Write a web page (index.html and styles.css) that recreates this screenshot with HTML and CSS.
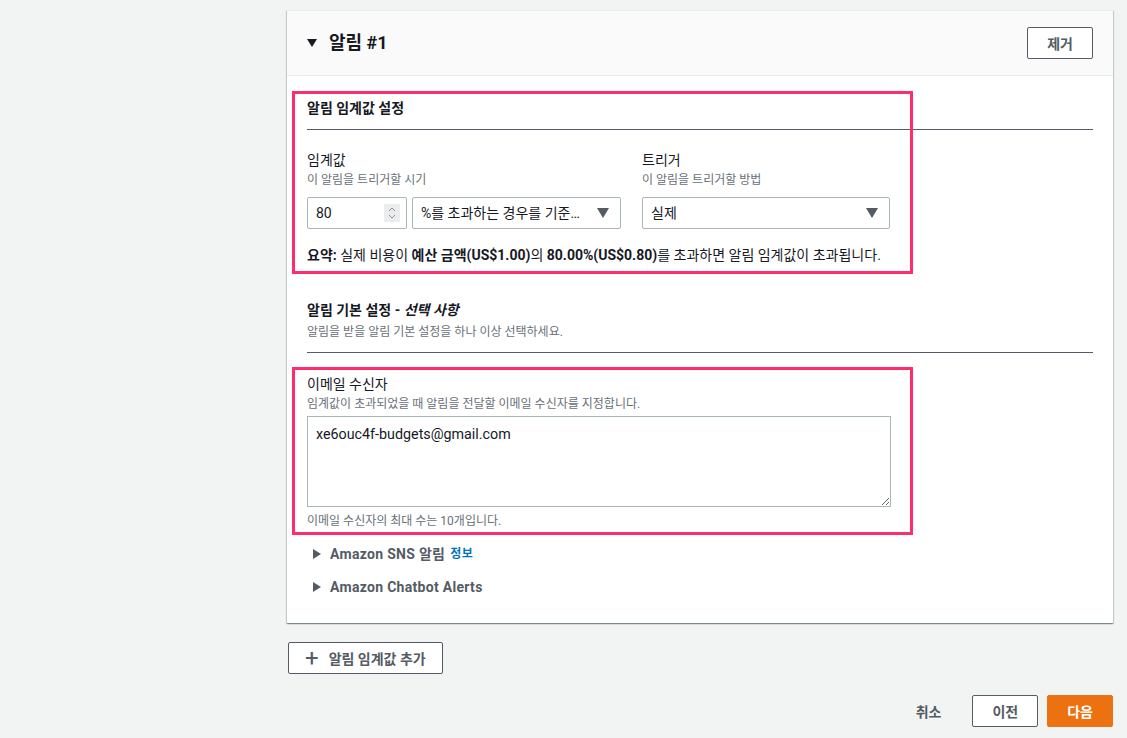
FILE: index.html
```html
<!DOCTYPE html>
<html lang="ko">
<head>
    <meta charset="UTF-8">
    <title>알림 구성</title>
    <link rel="stylesheet" href="styles.css">
</head>
<body>
    <div class="layout">
        <div class="side"></div>
        <main class="content">
            <!-- Alert #1 -->
            <div class="card">
                <div class="card-header">
                    <h2 class="card-title"><span class="caret-down"></span>알림 #1</h2>
                    <button class="btn">제거</button>
                </div>
                <div class="card-body">
                    <div class="highlight hl-threshold">
                        <h3 class="section-title">알림 임계값 설정</h3>
                        <div class="field-row">
                            <div class="field field-threshold">
                                <div class="label">임계값</div>
                                <div class="desc">이 알림을 트리거할 시기</div>
                                <div class="controls">
                                    <div class="input number-input">
                                        <span>80</span>
                                        <span class="spinner">
                                            <svg width="10" height="14" viewBox="0 0 10 14"><path d="M2 5 L5 2 L8 5" fill="none" stroke="#879196" stroke-width="1"/><path d="M2 9 L5 12 L8 9" fill="none" stroke="#879196" stroke-width="1"/></svg>
                                        </span>
                                    </div>
                                    <div class="input select select-type">
                                        <span>%를 초과하는 경우를 기준…</span>
                                        <span class="select-caret"></span>
                                    </div>
                                </div>
                            </div>
                            <div class="field field-trigger">
                                <div class="label">트리거</div>
                                <div class="desc">이 알림을 트리거할 방법</div>
                                <div class="input select">
                                    <span>실제</span>
                                    <span class="select-caret"></span>
                                </div>
                            </div>
                        </div>
                        <p class="summary"><b>요약:</b> 실제 비용이 <b>예산 금액(US$1.00)</b>의 <b>80.00%(US$0.80)</b>를 초과하면 알림 임계값이 초과됩니다.</p>
                    </div>

                    <div class="prefs">
                        <h3 class="section-title section-title-sub">알림 기본 설정 - <i>선택 사항</i></h3>
                        <div class="desc section-desc">알림을 받을 알림 기본 설정을 하나 이상 선택하세요.</div>
                    </div>

                    <div class="highlight hl-email">
                        <div class="label">이메일 수신자</div>
                        <div class="desc">임계값이 초과되었을 때 알림을 전달할 이메일 수신자를 지정합니다.</div>
                        <textarea class="textarea">xe6ouc4f-budgets@gmail.com</textarea>
                        <div class="desc hint">이메일 수신자의 최대 수는 10개입니다.</div>
                    </div>

                    <div class="expander"><span class="caret-right"></span>Amazon SNS 알림 <a class="info" href="#">정보</a></div>
                    <div class="expander"><span class="caret-right"></span>Amazon Chatbot Alerts</div>
                </div>
            </div>

            <button class="btn btn-add"><span class="plus">+</span>알림 임계값 추가</button>

            <div class="actions">
                <button class="btn btn-link">취소</button>
                <button class="btn">이전</button>
                <button class="btn btn-primary">다음</button>
            </div>
        </main>
    </div>
</body>
</html>
```

FILE: styles.css
```css
body {
    margin: 0;
    background-color: #f2f3f3;
    color: #16191f;
    font-family: Roboto, "Noto Sans CJK KR", sans-serif;
    font-size: 14px;
    line-height: 22px;
}

.layout {
    display: flex;
    padding-top: 10px;
}

.side {
    width: 287px;
    flex-shrink: 0;
}

.content {
    width: 826px;
}

.card {
    background-color: #fff;
    box-shadow: 0 1px 1px 0 rgba(0, 28, 36, 0.3), 1px 1px 1px 0 rgba(0, 28, 36, 0.15), -1px 1px 1px 0 rgba(0, 28, 36, 0.15);
    border-top: 1px solid #eaeded;
}

.card-header {
    display: flex;
    justify-content: space-between;
    align-items: center;
    height: 64px;
    padding: 0 20px;
    background-color: #fafafa;
    border-bottom: 1px solid #eaeded;
}

.card-title {
    margin: 0;
    font-size: 18px;
    font-weight: bold;
    display: flex;
    align-items: center;
}

.caret-down {
    display: inline-block;
    width: 0;
    height: 0;
    border-left: 5px solid transparent;
    border-right: 5px solid transparent;
    border-top: 8px solid #16191f;
    margin-right: 12px;
}

.btn {
    font-family: inherit;
    font-size: 14px;
    font-weight: bold;
    color: #545b64;
    background-color: #fff;
    border: 1px solid #545b64;
    border-radius: 2px;
    height: 32px;
    padding: 0 19px;
    cursor: pointer;
}

.card-body {
    padding: 21px 20px 25px;
}

.highlight {
    position: relative;
}

.highlight::after {
    content: "";
    position: absolute;
    left: -15px;
    width: 615px;
    border: 3px solid #fe2e6c;
    pointer-events: none;
}

.hl-threshold::after {
    top: -6px;
    bottom: -8px;
}

.hl-email::after {
    top: -6px;
    bottom: -5px;
}

.section-title {
    margin: 0;
    font-size: 14px;
    font-weight: bold;
    line-height: 22px;
    padding-bottom: 10px;
    border-bottom: 1px solid #545b64;
}

.field-row {
    display: flex;
    gap: 21px;
    margin-top: 19px;
}

.label {
    line-height: 22px;
}

.desc {
    font-size: 12px;
    line-height: 18px;
    color: #687078;
}

.controls {
    display: flex;
    gap: 5px;
    margin-top: 8px;
}

.input {
    display: flex;
    align-items: center;
    justify-content: space-between;
    box-sizing: border-box;
    height: 32px;
    padding: 0 8px;
    border: 1px solid #aab7b8;
    border-radius: 2px;
    background-color: #fff;
}

.number-input {
    width: 100px;
    padding-right: 6px;
}

.spinner {
    display: flex;
    align-items: center;
    justify-content: center;
    width: 16px;
    height: 18px;
    background-color: #eaeded;
}

.select-type {
    width: 209px;
}

.field-trigger .input {
    width: 248px;
    margin-top: 8px;
}

.select-caret {
    width: 0;
    height: 0;
    border-left: 6px solid transparent;
    border-right: 6px solid transparent;
    border-top: 10px solid #545b64;
    margin-right: 3px;
}

.summary {
    margin: 15px 0 0;
}

.prefs {
    margin-top: 33px;
}

.section-desc {
    margin-top: 2px;
    padding-bottom: 11px;
    border-bottom: 1px solid #545b64;
}

.section-title-sub {
    border-bottom: none;
    padding-bottom: 0;
}

.hl-email {
    margin-top: 20px;
}

.textarea {
    display: block;
    box-sizing: border-box;
    width: 584px;
    height: 91px;
    margin-top: 3px;
    padding: 6px 8px;
    border: 1px solid #aab7b8;
    border-radius: 0;
    font-family: inherit;
    font-size: 14.3px;
    line-height: 22px;
    color: #16191f;
    resize: vertical;
}

.hint {
    margin-top: 5px;
}

.expander {
    display: flex;
    align-items: center;
    margin-top: 13px;
    padding-left: 6px;
    font-weight: bold;
    color: #545b64;
    line-height: 22px;
    letter-spacing: 0.3px;
}

.expander + .expander {
    margin-top: 11px;
}

.caret-right {
    width: 0;
    height: 0;
    border-top: 5px solid transparent;
    border-bottom: 5px solid transparent;
    border-left: 8px solid #545b64;
    margin-right: 9px;
}

.info {
    color: #0073bb;
    font-size: 12px;
    text-decoration: none;
    margin-left: 5px;
}

.btn-add {
    margin-top: 19px;
    display: flex;
    align-items: center;
    padding: 0 16px 0 16px;
    margin-left: 1px;
}

.plus {
    font-size: 24px;
    font-weight: normal;
    margin-right: 10px;
    color: #545b64;
}

.actions {
    display: flex;
    justify-content: flex-end;
    gap: 9px;
    margin-top: 21px;
}

.btn-link {
    border-color: transparent;
    background: none;
    padding: 0 21px;
}

.btn-primary {
    background-color: #ec7211;
    border-color: #ec7211;
    color: #fff;
}
```
